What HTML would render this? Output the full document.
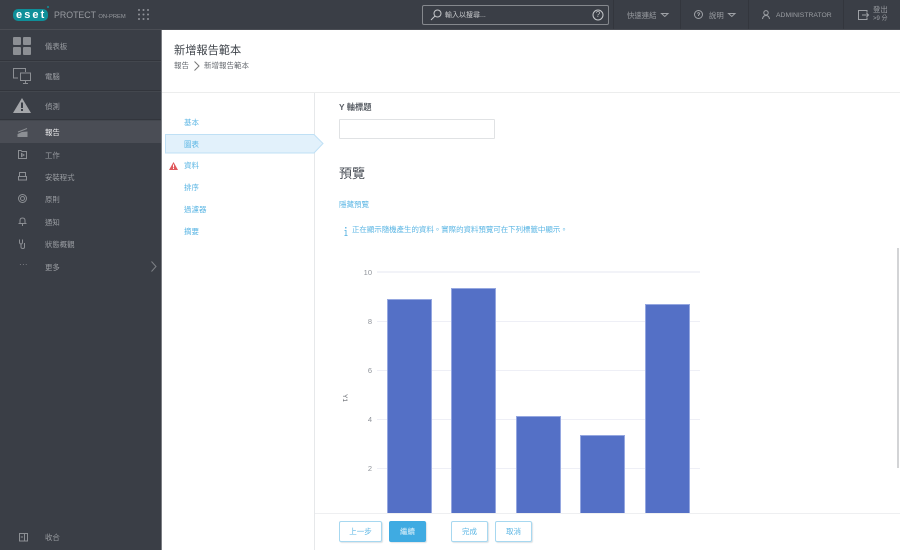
<!DOCTYPE html>
<html lang="zh-Hant"><head><meta charset="utf-8"><title>ESET PROTECT</title>
<style>
html,body{margin:0;padding:0;width:900px;height:550px;overflow:hidden;background:#fff}
body{position:relative;font-family:"Liberation Sans","Noto Sans CJK TC",sans-serif;font-size:7.5px;color:#4a4f57;filter:blur(.3px)}
.a{position:absolute;white-space:nowrap}
.bar{background:#3a3e46;left:0;top:0;width:900px;height:29px;border-bottom:1px solid #4a4d54}
.side{background:#3a3e46;left:0;top:30px;width:161px;height:520px;border-right:1px solid #7b7e83}
.sep{left:0;width:161px;height:1px;background:#32353c;border-bottom:1px solid #43474e}
.nt{left:45px;font-size:7.4px;line-height:12px;color:#9a9da2}
.vs{top:0;width:1px;height:29px;background:#33363d}
.tt{font-size:7.4px;line-height:12px;color:#9a9da2}
.step{left:184px;font-size:7.5px;line-height:12px;color:#5bb6e4}
.yl{font-size:7.5px;line-height:12px;color:#8f939a;width:20px;text-align:right;left:352px}
.grid{left:377px;width:323px;height:1px;background:#eeeff6}
.b{background:#5470c6;border:1px solid #95a7e0;border-bottom:0;box-sizing:border-box;width:45px}
.btn{top:521px;height:21px;box-sizing:border-box;border:1px solid #a7d8f0;border-radius:2px;font-size:7.5px;line-height:19px;text-align:center;color:#5bb6e4;background:#fff;box-shadow:1px 1px 1px #dfe3e6}
svg{position:absolute;overflow:visible}
</style></head>
<body>
<div class="a bar"></div>
<div class="a" style="left:13px;top:9px;width:35px;height:12px;border-radius:5px;background:#0f8f99"></div>
<div class="a" style="left:16px;top:8px;font:bold 11px/14px 'Liberation Sans',sans-serif;color:#fff;letter-spacing:2.1px">eset</div>
<div class="a" style="left:47px;top:6px;width:2px;height:2px;border-radius:1px;background:#0f8f99"></div>
<div class="a" style="left:54px;top:8px;font-size:8.800px;line-height:14px;color:#989ba0">PROTECT <span style="font-size:5.800px">ON-PREM</span></div>
<svg style="left:138px;top:9px" width="12" height="12" fill="#90939a"><circle cx="1" cy="1" r="1"/><circle cx="5.500" cy="1" r="1"/><circle cx="10" cy="1" r="1"/><circle cx="1" cy="5.500" r="1"/><circle cx="5.500" cy="5.500" r="1"/><circle cx="10" cy="5.500" r="1"/><circle cx="1" cy="10" r="1"/><circle cx="5.500" cy="10" r="1"/><circle cx="10" cy="10" r="1"/></svg>

<div class="a" style="left:422px;top:5px;width:187px;height:20px;box-sizing:border-box;border:1px solid #85888d;border-radius:2px"></div>
<svg style="left:430px;top:9px" width="12" height="12" fill="none" stroke="#c5c7ca"><circle cx="7.500" cy="4.500" r="3.500"/><path d="M5 7L1 11"/></svg>
<div class="a" style="left:445px;top:9.500px;font-size:7px;line-height:12px;color:#c8cacd">輸入以搜尋...</div>
<svg style="left:592px;top:9px" width="12" height="12" fill="none" stroke="#c5c7ca"><circle cx="6" cy="6" r="5"/></svg>
<div class="a" style="left:592px;top:9px;width:12px;text-align:center;font-size:8px;line-height:12px;color:#c5c7ca">?</div>
<div class="a vs" style="left:613px"></div><div class="a vs" style="left:680px"></div><div class="a vs" style="left:748px"></div><div class="a vs" style="left:843px"></div>
<div class="a tt" style="left:627px;top:9.500px">快速連結</div>
<svg style="left:661px;top:13px" width="8" height="4" fill="none" stroke="#9ea1a6"><path d="M.5 .5H7L3.800 3.500Z"/></svg>
<svg style="left:694px;top:10px" width="9" height="9" fill="none" stroke="#9ea1a6"><circle cx="4.500" cy="4.500" r="4"/><path d="M3.300 3.500Q4.500 1.800 5.700 3.500Q5.600 4.500 4.500 5V6"/></svg>
<div class="a tt" style="left:709px;top:9.500px">說明</div>
<svg style="left:728px;top:13px" width="8" height="4" fill="none" stroke="#9ea1a6"><path d="M.5 .5H7L3.800 3.500Z"/></svg>
<svg style="left:762px;top:10px" width="8" height="9" fill="none" stroke="#9ea1a6"><circle cx="4" cy="2.800" r="2.200"/><path d="M.5 9Q1 5.500 4 5.500Q7 5.500 7.500 9"/></svg>
<div class="a tt" style="left:776px;top:9.500px;font-size:6.800px">ADMINISTRATOR</div>
<svg style="left:858px;top:10px" width="11" height="10" fill="none" stroke="#9ea1a6"><path d="M9 2.500V.5H.5V9.500H9V7.500M4 5H10.500M8.500 3L10.500 5L8.500 7"/></svg>
<div class="a tt" style="left:873px;top:5px;line-height:10px">登出</div>
<div class="a" style="left:873px;top:15px;font-size:6px;line-height:9px;color:#9ea1a6">&gt;9 分</div>

<div class="a side"></div>
<div class="a sep" style="top:60px"></div><div class="a sep" style="top:90px"></div><div class="a sep" style="top:119px"></div>
<div class="a" style="left:0;top:121px;width:161px;height:22px;background:#4a4d55"></div>
<svg style="left:13px;top:37px" width="19" height="19" fill="#8c8f94"><rect width="8" height="8" rx="1"/><rect x="10" width="8" height="8" rx="1"/><rect y="10" width="8" height="8" rx="1"/><rect x="10" y="10" width="8" height="8" rx="1"/></svg>
<svg style="left:13px;top:68px" width="19" height="16" fill="none" stroke="#8c8f94"><path d="M5 10H.5V.5H12.500V4"/><rect x="7.500" y="5" width="10" height="7.500"/><path d="M10 15.500H15M12.500 12.500V15.500"/></svg>
<svg style="left:13px;top:98px" width="18" height="15"><path d="M9 0L18 15H0Z" fill="#a4a6aa"/><path d="M8 4.500H10V10H8ZM8 11H10V13H8Z" fill="#3a3e46"/></svg>
<svg style="left:18px;top:128px" width="10" height="9" fill="none" stroke="#8c8f94"><path d="M0 4L4 2.500L9 .5" /><path d="M0 6.500L4 4.500L9 4V8.500H0Z" fill="#8c8f94"/></svg>
<svg style="left:18px;top:150px" width="9" height="9" fill="none" stroke="#8c8f94"><path d="M.5 8.500V.5H3L4 1.500H8.500V8.500Z"/><path d="M3.500 3.500V6.500L6 5Z"/></svg>
<svg style="left:18px;top:172px" width="9" height="9" fill="none" stroke="#8c8f94"><path d="M1.500 4V.5H7.500V4M.5 4.500H8.500V8H.5Z"/></svg>
<svg style="left:18px;top:194px" width="9" height="9" fill="none" stroke="#8c8f94"><circle cx="4.500" cy="4.500" r="4"/><circle cx="4.500" cy="4.500" r="2"/></svg>
<svg style="left:18px;top:217px" width="9" height="9" fill="none" stroke="#8c8f94"><path d="M2 6.500V3.500Q2 1 4.500 1Q7 1 7 3.500V6.500ZM.5 6.500H8.500M4.500 7V9"/></svg>
<svg style="left:19px;top:239px" width="8" height="10" fill="none" stroke="#8c8f94"><path d="M.5 .5V3Q.5 5 2 5Q3.500 5 3.500 3V.5M2 5V8Q2 9.500 4 9.500Q5.500 9.500 5.500 8V4"/></svg>
<div class="a" style="left:19px;top:260px;color:#8c8f94;font-size:8px;line-height:10px;letter-spacing:.3px">···</div>
<svg style="left:19px;top:533px" width="9" height="9" fill="none" stroke="#8c8f94"><rect x=".5" y=".5" width="8" height="7.500"/><path d="M5.500 .5V8M1.800 4H4"/></svg>
<svg style="left:151px;top:261px" width="6" height="11" fill="none" stroke="#7d8086"><path d="M.5 .5L5 5.500L.5 10.500"/></svg>

<div class="a nt" style="top:41px">儀表板</div>
<div class="a nt" style="top:71px">電腦</div>
<div class="a nt" style="top:101px">偵測</div>
<div class="a nt" style="top:126.500px;color:#f0f0f1">報告</div>
<div class="a nt" style="top:149.500px">工作</div>
<div class="a nt" style="top:171.500px">安裝程式</div>
<div class="a nt" style="top:194px">原則</div>
<div class="a nt" style="top:216.500px">通知</div>
<div class="a nt" style="top:239px">狀態概觀</div>
<div class="a nt" style="top:261.500px">更多</div>
<div class="a nt" style="top:532px">收合</div>

<div class="a" style="left:174px;top:43px;font-size:11.200px;line-height:16px;color:#3f444b">新增報告範本</div>
<div class="a" style="left:174px;top:60px;font-size:7.500px;line-height:12px;color:#666a70">報告</div>
<svg style="left:194px;top:61px" width="6" height="10" fill="none" stroke="#777"><path d="M.5 .5L5 5L.5 9.500"/></svg>
<div class="a" style="left:204px;top:60px;font-size:7.500px;line-height:12px;color:#666a70">新增報告範本</div>
<div class="a" style="left:162px;top:92px;width:738px;height:1px;background:#eceded"></div>
<div class="a" style="left:314px;top:93px;width:1px;height:457px;background:#e6e8ea"></div>

<div class="a step" style="top:116.500px">基本</div>
<svg style="left:165px;top:134px" width="159" height="20"><path d="M.5 .5H149L158 9.500L149 19H.5Z" fill="#e2f1fb" stroke="#bfe0f5"/></svg>
<div class="a step" style="top:138.500px">圖表</div>
<svg style="left:169px;top:162px" width="9" height="8"><path d="M4.500 0L9 8H0Z" fill="#e0595c"/><path d="M4 2.500H5V5.500H4ZM4 6H5V7H4Z" fill="#fff"/></svg>
<div class="a step" style="top:160px">資料</div>
<div class="a step" style="top:182px">排序</div>
<div class="a step" style="top:204px">過濾器</div>
<div class="a step" style="top:226px">摘要</div>

<div class="a" style="left:339px;top:101px;font-size:8.300px;line-height:12px;font-weight:bold;color:#5a5f66">Y 軸標題</div>
<div class="a" style="left:339px;top:119px;width:156px;height:20px;box-sizing:border-box;border:1px solid #e0e2e4;border-radius:1px;background:#fff"></div>
<div class="a" style="left:339px;top:165px;font-size:13px;line-height:18px;color:#4a4f57">預覽</div>
<div class="a" style="left:339px;top:198.500px;font-size:7.500px;line-height:12px;color:#5bb6e4">隱藏預覽</div>
<svg style="left:344px;top:227px" width="4" height="9" fill="#6fbde6"><rect x="1" y="0" width="1.500" height="1.500"/><path d="M.5 3H2.500V8H3.500V9H.5V8H1.500V4H.5Z"/></svg>
<div class="a" style="left:352px;top:224px;font-size:7.450px;line-height:12px;color:#5bb6e4">正在顯示隨機產生的資料。實際的資料預覽可在下列標籤中顯示。</div>

<div class="a" style="left:897px;top:248px;width:2px;height:220px;background:#d3d4d6"></div>

<div class="a grid" style="top:271px;height:2px;background:#f2f3f8"></div>
<div class="a grid" style="top:321px"></div><div class="a grid" style="top:370px"></div><div class="a grid" style="top:419px"></div><div class="a grid" style="top:468px"></div>
<div class="a yl" style="top:266.500px">10</div><div class="a yl" style="top:315.500px">8</div><div class="a yl" style="top:364.500px">6</div><div class="a yl" style="top:414px">4</div><div class="a yl" style="top:463px">2</div>
<div class="a" style="left:339px;top:393px;font-size:6.500px;line-height:10px;width:10px;text-align:center;color:#666a70;transform:rotate(90deg)">Y1</div>

<div class="a b" style="left:387px;top:299px;height:214px"></div>
<div class="a b" style="left:451px;top:288px;height:225px"></div>
<div class="a b" style="left:516px;top:416px;height:97px"></div>
<div class="a b" style="left:580px;top:435px;height:78px"></div>
<div class="a b" style="left:645px;top:304px;height:209px"></div>

<div class="a" style="left:315px;top:513px;width:585px;height:37px;background:#fff;border-top:1px solid #eeeff1"></div>
<div class="a btn" style="left:339px;width:43px">上一步</div>
<div class="a btn" style="left:389px;width:37px;background:#3fabe2;border-color:#3fabe2;color:#e6f4fb">繼續</div>
<div class="a btn" style="left:451px;width:37px">完成</div>
<div class="a btn" style="left:495px;width:37px">取消</div>
</body></html>
